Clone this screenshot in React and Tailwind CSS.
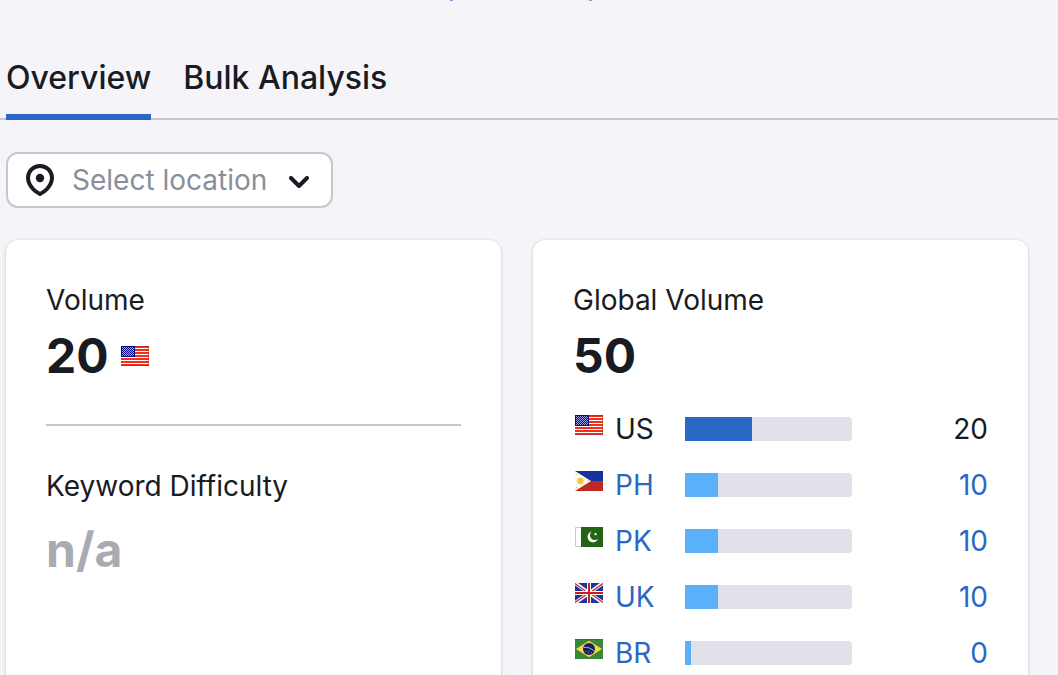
import { useState } from "react";

function FlagUS() {
  return (
    <svg width="28" height="20" viewBox="0 0 28 20" aria-hidden="true" shapeRendering="crispEdges">
      <rect width="28" height="20" fill="#f0301c" />
      <path d="M14 2.500h14M14 5.500h14M14 8.500h14M0 11.500h28M0 14.500h28M0 17.500h28" stroke="#ffffff" />
      <rect width="14" height="11" fill="#0a0a8c" />
      <path
        d="M1 1.500h12M1 3.500h12M1 5.500h12M1 7.500h12M1 9.500h12M2 2.500h11M2 4.500h11M2 6.500h11M2 8.500h11"
        stroke="#a0a0dc"
        strokeDasharray="1 1"
      />
      <path d="M14 0.500h14M0 19.500h28" stroke="#c8281c" />
      <path d="M27.500 0v20" stroke="#a01808" strokeOpacity="0.4" />
    </svg>
  );
}

function FlagPH() {
  return (
    <svg width="28" height="20" viewBox="0 0 28 20" aria-hidden="true">
      <rect width="28" height="10" fill="#14349c" />
      <rect y="10" width="28" height="10" fill="#c02828" />
      <path d="M0 0l16 10L0 20z" fill="#ffffff" />
      <path
        d="M5.500 6v8M1.500 10h8M2.600 7.100l5.800 5.800M8.400 7.100l-5.800 5.800"
        stroke="#f8d050"
        strokeWidth="1.200"
      />
      <circle cx="5.500" cy="10" r="2.900" fill="#f6c430" />
      <path d="M0.500 2.500h1.500V4H0.500zM0.500 16h1.500v1.500H0.500zM12 9.300h1.500v1.400H12z" fill="#f6d04c" />
    </svg>
  );
}

function FlagPK() {
  return (
    <svg width="28" height="20" viewBox="0 0 28 20" aria-hidden="true">
      <rect width="28" height="20" fill="#256316" />
      <rect width="6" height="20" fill="#ffffff" />
      <path d="M6 0.500H0.500v19H6" fill="none" stroke="#c9c9cc" />
      <path d="M16.600 4.600a5.400 5.400 0 1 0 6.400 7.200a4.500 4.500 0 1 1-6.400-7.200z" fill="#ffffff" />
      <path d="M20.600 5.600l.5 1 1.100.1-.8.800.2 1.100-1-.5-1 .5.200-1.100-.8-.8 1.100-.1z" fill="#ffffff" />
    </svg>
  );
}

function FlagUK() {
  return (
    <svg width="28" height="20" viewBox="0 0 28 20" aria-hidden="true">
      <rect width="28" height="20" fill="#1a359c" />
      <path d="M0 0l28 20M28 0L0 20" stroke="#ffffff" strokeWidth="3.600" />
      <path d="M0 0.600l12 8.600M28 19.400l-12-8.600M28 0.400L16 9M0 19.600L12 11" stroke="#c8202c" strokeWidth="1.200" />
      <path d="M14 0v20M0 10h28" stroke="#ffffff" strokeWidth="4" />
      <path d="M14 0v20M0 10h28" stroke="#c81e1e" strokeWidth="2" />
    </svg>
  );
}

function FlagBR() {
  return (
    <svg width="28" height="20" viewBox="0 0 28 20" aria-hidden="true">
      <rect width="28" height="20" fill="#388838" />
      <path d="M14 1.800L27 10L14 18.200L1 10z" fill="#f8d548" />
      <circle cx="14" cy="10" r="6" fill="#15205f" />
      <path d="M8.600 8.400c3.800-.6 8 1 10.800 3.800" fill="none" stroke="#a8b6d8" strokeWidth="1" />
      <path d="M10.500 12.500h1M13 14h1M16 13.500h1M13.500 11.800h1" stroke="#7884b8" />
      <path d="M0 0.500h28" stroke="#256428" strokeDasharray="1 1" />
    </svg>
  );
}

const countries = [
  { code: "US", Flag: FlagUS, volume: 20, share: 40 },
  { code: "PH", Flag: FlagPH, volume: 10, share: 20 },
  { code: "PK", Flag: FlagPK, volume: 10, share: 20 },
  { code: "UK", Flag: FlagUK, volume: 10, share: 20 },
  { code: "BR", Flag: FlagBR, volume: 0, share: 0 },
];

const tabs = ["Overview", "Bulk Analysis"];

function Tabs() {
  const [active, setActive] = useState("Overview");

  return (
    <div role="tablist" className="flex gap-8 border-b-2 border-[#c4c7cc] pl-1.5">
      {tabs.map((tab) => (
        <button
          key={tab}
          type="button"
          role="tab"
          aria-selected={active === tab}
          onClick={() => setActive(tab)}
          className={
            active === tab
              ? "-mb-0.5 cursor-pointer border-b-6 border-[#2b68c5] pb-4 text-[32px] leading-10 font-medium"
              : "-mb-0.5 cursor-pointer border-b-6 border-transparent pb-4 text-[32px] leading-10 font-medium"
          }
        >
          {tab}
        </button>
      ))}
    </div>
  );
}

function LocationSelect() {
  return (
    <div className="relative w-fit">
      <svg
        width="28"
        height="32"
        viewBox="0 0 28 32"
        aria-hidden="true"
        className="pointer-events-none absolute top-3 left-5"
      >
        <path
          d="M14 2C7.400 2 2 7.200 2 13.800c0 4.600 2.300 8.200 5 11.200c2 2.200 4.600 3.600 7 5c2.400-1.400 5-2.800 7-5c2.700-3 5-6.600 5-11.200C26 7.200 20.600 2 14 2z"
          fill="none"
          stroke="#191b23"
          strokeWidth="4"
          strokeLinejoin="round"
        />
        <circle cx="14" cy="14" r="4.200" fill="#191b23" />
      </svg>
      <select
        aria-label="Location"
        defaultValue=""
        className="h-14 w-[327px] appearance-none rounded-xl border-2 border-[#c4c7cc] bg-white pr-14 pl-16 text-[28px] text-[#8a8e9b]"
      >
        <option value="">Select location</option>
      </select>
      <svg
        width="20"
        height="12"
        viewBox="0 0 20 12"
        aria-hidden="true"
        className="pointer-events-none absolute top-6 right-6"
      >
        <path
          d="M2 2l8 8l8-8"
          fill="none"
          stroke="#191b23"
          strokeWidth="4"
          strokeLinecap="round"
          strokeLinejoin="round"
        />
      </svg>
    </div>
  );
}

function Card({ children }) {
  return (
    <section className="rounded-xl bg-white p-10 shadow-[0_0_2px_rgba(25,27,35,0.16),0_2px_4px_rgba(25,27,35,0.12)]">
      {children}
    </section>
  );
}

function CountryRow({ code, Flag, volume, share }) {
  const current = code === "US";

  return (
    <tr className={current ? "h-14" : "h-14 text-[#2b68c5]"}>
      <th scope="row" className="w-[112px] p-0 text-left font-normal">
        <div className="flex items-center gap-3 pl-0.5">
          <span className="mb-2">
            <Flag />
          </span>
          {current ? <span>{code}</span> : <a href={"#" + code}>{code}</a>}
        </div>
      </th>
      <td className="w-[167px] p-0">
        <div className="h-6 overflow-hidden rounded-r bg-[#e0e1e9]">
          <div
            className={current ? "h-6 min-w-1.5 bg-[#2b68c5]" : "h-6 min-w-1.5 bg-[#5bb0fb]"}
            style={{ width: share + "%" }}
          />
        </div>
      </td>
      <td className="p-0 text-right">
        {current ? volume : <a href={"#" + code + "-volume"}>{volume}</a>}
      </td>
    </tr>
  );
}

export default function App() {
  return (
    <main className="min-h-screen bg-[#f4f4f9] font-['Inter',sans-serif] text-[28px] leading-10 text-[#191b23]">
      {/* lower edge of the link line above the tabs */}
      <div aria-hidden="true" className="flex h-px justify-center gap-[136px] pr-4">
        <span className="w-[3px] bg-[#7ba0dc]" />
        <span className="w-[3px] bg-[#7ba0dc]" />
      </div>

      <div className="pt-[57px]">
        <Tabs />
      </div>

      <div className="pt-8 pr-[30px] pl-1.5">
        <LocationSelect />

        <div className="mt-8 grid grid-cols-2 gap-8">
          <Card>
            <h2>Volume</h2>
            <div className="mt-2 flex items-center gap-3">
              <span className="text-5xl leading-14 font-bold">20</span>
              <FlagUS />
            </div>
            <hr className="my-10 border-t-2 border-[#c4c7cc]" />
            <h2>Keyword Difficulty</h2>
            <p className="mt-4 text-5xl leading-14 font-bold text-[#a9abb3]">n/a</p>
          </Card>

          <Card>
            <h2>Global Volume</h2>
            <p className="mt-2 text-5xl leading-14 font-bold">50</p>
            <table className="mt-[17px] w-full table-fixed">
              <tbody>
                {countries.map((country) => (
                  <CountryRow key={country.code} {...country} />
                ))}
              </tbody>
            </table>
          </Card>
        </div>
      </div>
    </main>
  );
}
